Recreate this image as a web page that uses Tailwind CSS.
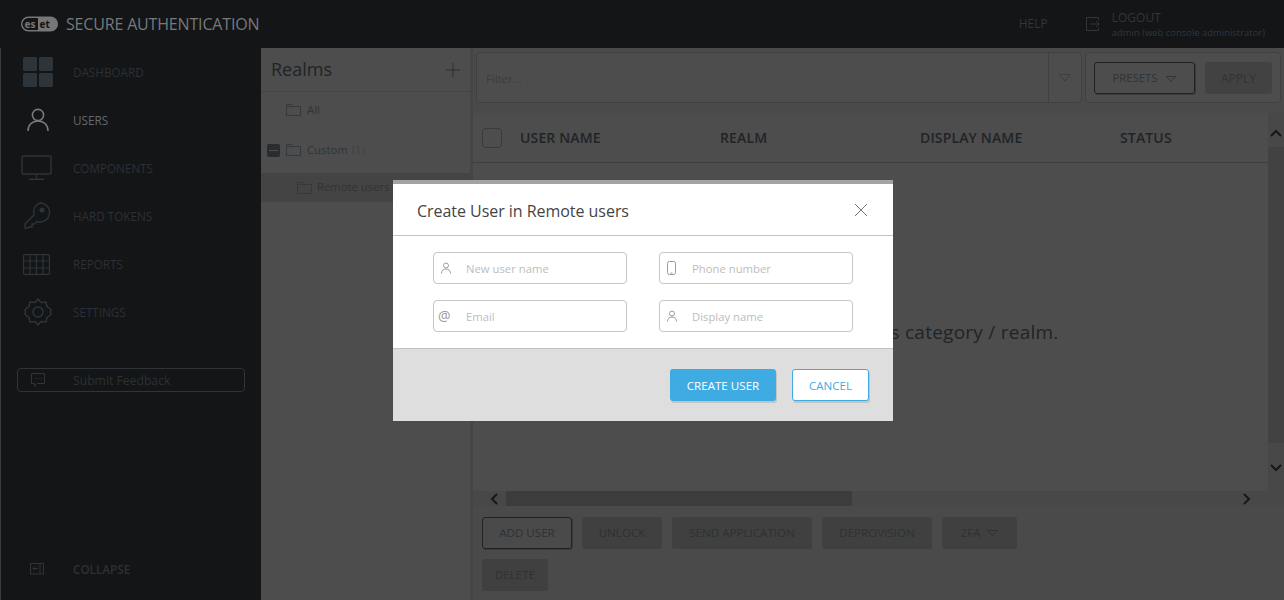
<!doctype html>
<html>
<head>
<meta charset="utf-8">
<script src="https://cdn.jsdelivr.net/npm/@tailwindcss/browser@4"></script>
</head>
<body class="bg-[#4d4d4d] font-['Open_Sans','Noto_Sans',sans-serif]">
<div class="relative w-[1284px] h-[600px] overflow-hidden">
  <header class="h-12 bg-[#131517] flex items-center pl-[21px]">
    <svg width="37" height="16" viewBox="0 0 37 16"><path d="M17 1.300h13a6.700 6.700 0 0 1 0 13.400H17z" fill="#777"/><rect x="0.700" y="1.300" width="35.600" height="13.400" rx="6.700" fill="none" stroke="#777" stroke-width="1.400"/><text x="3.500" y="11.500" font-size="10" font-weight="700" fill="#777" font-family="Open Sans">es</text><text x="18.500" y="11.500" font-size="10" font-weight="700" fill="#131517" font-family="Open Sans">et</text></svg>
    <span class="ml-[8px] text-[16px] tracking-[-0.17px] text-[#77797b]">SECURE AUTHENTICATION</span>
    <span class="ml-auto text-[12px] text-[#2f373c]">HELP</span>
    <svg class="ml-[38px]" width="14" height="14" viewBox="0 0 14 14" fill="none" stroke="#2f373c"><path d="M12.500 3.500V.5H.5v13h12v-3M4.500 7H13M10 4l3 3-3 3"/></svg>
    <div class="ml-[12px] mr-[19px] flex flex-col mt-[1px]">
      <span class="text-[12px] leading-[15px] text-[#2f373c]">LOGOUT</span>
      <span class="text-[9.450px] leading-[15px] text-[#2f373c]">admin (web console administrator)</span>
    </div>
  </header>
  <div class="flex h-[552px]">
    <aside class="w-[261px] bg-[#131517] flex flex-col text-[11.700px] text-[#2b3136] border-l border-[#3a3d3f]">
      <nav class="flex flex-col">
        <a class="h-12 flex items-center">
          <span class="w-[72px] pl-[22px] flex"><svg width="30" height="30" viewBox="0 0 30 30" fill="#2d343a"><rect width="14" height="14" rx="1.500"/><rect x="16" width="14" height="14" rx="1.500"/><rect y="16" width="14" height="14" rx="1.500"/><rect x="16" y="16" width="14" height="14" rx="1.500"/></svg></span><span class="pt-[2px]">DASHBOARD</span></a>
        <a class="h-12 flex items-center text-[#666a6d]">
          <span class="w-[72px] pl-[26px] flex"><svg width="22" height="24" viewBox="0 0 22 24" fill="none" stroke="#767a7c" stroke-width="1.600"><circle cx="11" cy="7" r="5.600"/><path d="M1 23c0-6 4-10 10-10s10 4 10 10"/></svg></span><span class="pt-[2px]">USERS</span></a>
        <a class="h-12 flex items-center">
          <span class="w-[72px] pl-[20px] flex"><svg width="32" height="26" viewBox="0 0 32 26" fill="none" stroke="#2d353a" stroke-width="1.400"><rect x="1" y="1" width="29" height="18" rx="1"/><path d="M15.500 19v4M8 24.300h15"/></svg></span><span class="pt-[2px]">COMPONENTS</span></a>
        <a class="h-12 flex items-center">
          <span class="w-[72px] pl-[23px] flex"><svg width="28" height="28" viewBox="0 0 28 28" fill="none" stroke="#2d353a" stroke-width="1.400"><path d="M16 1a9.500 9.500 0 1 1-3 18.500l-2.500 2.500H8v3H5l-1 1H1v-4l9-9A9.500 9.500 0 0 1 16 1z"/><circle cx="18" cy="8" r="1.800" fill="#2d353a"/></svg></span><span class="pt-[2px]">HARD TOKENS</span></a>
        <a class="h-12 flex items-center">
          <span class="w-[72px] pl-[22px] flex"><svg width="27" height="21" viewBox="0 0 27 21" fill="none" stroke="#2d353a" stroke-width="1.200"><rect x=".6" y=".6" width="25.800" height="19.800" rx="1"/><path d="M7 .6v19.800M13.500 .6v19.800M20 .6v19.800M.6 7h25.800M.6 14h25.800"/></svg></span><span class="pt-[2px]">REPORTS</span></a>
        <a class="h-12 flex items-center">
          <span class="w-[72px] pl-[23px] flex"><svg width="28" height="28" viewBox="0 0 28 28" fill="none" stroke="#2d353a" stroke-width="1.500"><path d="M14 1l3 3.500 5-.5 1 4.500 4 3-.5 2.500.5 2.500-4 3-1 4.500-5-.5-3 3.500-3-3.500-5 .5-1-4.500-4-3 .5-2.500L1 11.500l4-3L6 4l5 .5z"/><circle cx="14" cy="14" r="5"/></svg></span><span class="pt-[2px]">SETTINGS</span></a>
      </nav>
      <a class="mt-[32px] ml-[16px] w-[228px] h-6 border border-[#2d353a] rounded-[4px] flex items-center text-[12.200px]">
        <span class="w-[55px] pl-[13px] flex"><svg width="14" height="14" viewBox="0 0 14 14" fill="none" stroke="#2d353a"><path d="M.5 .5h13v10H6l-2.500 3v-3h-3z"/><path d="M4 5.500h1M7 5.500h1M10 5.500h1"/></svg></span><span class="pt-[2px]">Submit Feedback</span></a>
      <a class="mt-auto mb-[7px] h-[48px] flex items-center font-semibold">
        <span class="w-[72px] pl-[29px] flex"><svg width="15" height="12" viewBox="0 0 15 12" fill="none" stroke="#2d353a"><rect x=".5" y=".5" width="13" height="10.500"/><path d="M10 .5v10.500M8 5.500H3M5 3.500l-2 2 2 2"/></svg></span><span class="pt-[2px]">COLLAPSE</span></a>
    </aside>

    <section class="w-[209px] bg-[#4d4d4d] text-[#2e3438] border-r-[3px] border-[#454545] box-content text-[11.300px]">
      <div class="h-[44px] flex items-center justify-between pl-[10px] pr-[10px] border-b border-dotted border-[#3e3e3e]">
        <span class="text-[18px] text-[#202427]">Realms</span>
        <svg width="14" height="14" viewBox="0 0 14 14" stroke="#2a2f33"><path d="M7 0v14M0 7h14"/></svg>
      </div>
      <div class="h-[36px] flex items-center pl-[25px] gap-[6px]">
        <svg width="15" height="12" viewBox="0 0 15 12" fill="none" stroke="#33393d"><path d="M.5 11.500V.5h5l1 2h8v9z"/><path d="M.5 2.500h6"/></svg>All</div>
      <div class="h-[44px] flex items-center pl-[6px]">
        <span class="w-[13px] h-[13px] bg-[#2a2d2f] rounded-[2px] flex items-center justify-center"><span class="w-[9px] h-px bg-[#4d4d4d]"></span></span>
        <svg class="ml-[6px] mr-[6px]" width="15" height="12" viewBox="0 0 15 12" fill="none" stroke="#33393d"><path d="M.5 11.500V.5h5l1 2h8v9z"/><path d="M.5 2.500h6"/></svg>Custom<span class="ml-1 text-[#3e4245]">(1)</span></div>
      <div class="h-[29px] mt-[1px] flex items-center pl-[36px] gap-[5px] bg-[#444444]">
        <svg width="15" height="12" viewBox="0 0 15 12" fill="none" stroke="#33393d"><path d="M.5 11.500V.5h5l1 2h8v9z"/><path d="M.5 2.500h6"/></svg>Remote users</div>
    </section>

    <main class="flex-1 bg-[#4a4a4a] flex flex-col min-w-0">
      <div class="flex gap-[3px] pl-[3px] pr-[3px] pt-[4px] h-[65px] shrink-0">
        <div class="flex w-[606px] h-[51px] bg-[#4d4d4d] border border-[#404040] rounded-[4px]">
          <span class="flex-1 pl-[9px] leading-[51px] text-[11.300px] text-[#3c3c3c]">Filter...</span>
          <span class="w-[33px] border-l border-[#404040] flex items-center justify-center"><svg width="12" height="8" viewBox="0 0 12 8" fill="none" stroke="#3a3f43"><path d="M.5 .5h11L6 7z"/></svg></span>
        </div>
        <div class="flex-1 h-[51px] bg-[#4d4d4d] border border-[#404040] rounded-[4px] flex items-center pl-[8px] gap-[10px] text-[11.300px]">
          <span class="w-[101px] h-[32px] mt-[1px] pt-[1px] border border-[#1d2226] rounded-[3px] shadow-[1px_1px_0_#3a3a3a] flex items-center justify-center gap-[9px] text-[#2e3438]">PRESETS<svg width="10" height="6" viewBox="0 0 10 6" fill="none" stroke="#2e3438"><path d="M.5 .5h9L5 5.500z"/></svg></span>
          <span class="w-[67px] h-[32px] mt-[1px] pt-[1px] bg-[#424242] rounded-[3px] flex items-center justify-center text-[#2e3438] text-[12px]">APPLY</span>
        </div>
      </div>
      <div class="flex-1 min-h-0 flex">
        <div class="flex-1 bg-[#4d4d4d] flex flex-col">
          <div class="h-[50px] shrink-0 grid grid-cols-[47px_200px_200px_200px_1fr] items-center border-b border-[#3e3e3e] text-[14px] tracking-[0.15px] font-semibold text-[#202427]">
            <span class="ml-[9px] w-5 h-5 border border-[#3a3a3a] rounded-[4px]"></span>
            <span>USER NAME</span><span>REALM</span><span>DISPLAY NAME</span><span>STATUS</span>
          </div>
          <div class="flex-1 flex items-center justify-center text-[19px] tracking-[0.25px] text-[#202427] pt-[10px] pr-[14px]">There are no users in this category / realm.</div>
        </div>
        <div class="w-[16px] bg-[#484848] flex flex-col items-center">
          <div class="h-[34px] shrink-0 flex items-center justify-center pt-[6px]"><svg width="12" height="8" viewBox="0 0 12 8" fill="none" stroke="#14181b" stroke-width="2"><path d="M1 7l5-5 5 5"/></svg></div>
          <div class="w-full flex-1 bg-[#424242]"></div>
          <div class="h-[48px] shrink-0 flex items-center justify-center pt-[2px]"><svg width="12" height="8" viewBox="0 0 12 8" fill="none" stroke="#14181b" stroke-width="2"><path d="M1 1l5 5 5-5"/></svg></div>
        </div>
      </div>
      <div class="h-[15px] shrink-0 flex items-center pl-[17px] bg-[#484848]">
        <svg width="8" height="12" viewBox="0 0 8 12" fill="none" stroke="#14181b" stroke-width="2"><path d="M7 1L2 6l5 5"/></svg>
        <span class="ml-[8px] w-[346px] h-[15px] bg-[#3c3c3c]"></span>
        <svg class="ml-auto mr-[33px]" width="8" height="12" viewBox="0 0 8 12" fill="none" stroke="#14181b" stroke-width="2"><path d="M1 1l5 5-5 5"/></svg>
      </div>
      <div class="shrink-0 w-[560px] flex flex-wrap gap-[10px] pl-[9px] pt-[11px] pb-[9px] text-[11.600px] text-[#2c3236]">
        <span class="w-[90px] h-[32px] border border-[#1d2226] rounded-[3px] shadow-[1px_1px_0_#3a3a3a] flex items-center justify-center">ADD USER</span>
        <span class="w-[80px] h-[32px] bg-[#404040] rounded-[3px] flex items-center justify-center">UNLOCK</span>
        <span class="w-[140px] h-[32px] bg-[#404040] rounded-[3px] flex items-center justify-center">SEND APPLICATION</span>
        <span class="w-[110px] h-[32px] bg-[#404040] rounded-[3px] flex items-center justify-center">DEPROVISION</span>
        <span class="w-[75px] h-[32px] bg-[#404040] rounded-[3px] flex items-center justify-center gap-[7px]">2FA<svg width="11" height="6" viewBox="0 0 11 6" fill="none" stroke="#2c3236"><path d="M.5 .5h10L5.500 5.500z"/></svg></span>
        <span class="w-[66px] h-[32px] bg-[#404040] rounded-[3px] flex items-center justify-center">DELETE</span>
      </div>
    </main>
  </div>

  <div class="absolute left-[393px] top-[180px] w-[500px] h-[241px] bg-white border-t-4 border-[#a3a3a3] flex flex-col">
    <div class="h-[52px] shrink-0 flex items-center justify-between pl-[24px] pr-[25px] border-b border-[#c4c4c4]">
      <span class="text-[16px] pt-[2px] tracking-[-0.04px] text-[#444444]">Create User in Remote users</span>
      <svg width="14" height="14" viewBox="0 0 14 14" stroke="#777777" stroke-width="1"><path d="M1 1l12 12M13 1L1 13"/></svg>
    </div>
    <div class="h-[113px] shrink-0 border-b border-[#c4c4c4] grid grid-cols-[194px_194px] gap-x-[32px] gap-y-[16px] pl-[40px] pt-[16px] content-start text-[11.300px] text-[#bdbdbd]">
      <div class="h-[32px] border border-[#c6c6c6] rounded-[4px] flex items-center">
        <span class="w-[32px] pl-[6px] flex"><svg width="12" height="12" viewBox="0 0 12 12" fill="none" stroke="#9a9a9a"><circle cx="6" cy="3.500" r="2.500"/><path d="M1.500 11.500c0-3 2-4.500 4.500-4.500s4.500 1.500 4.500 4.500"/></svg></span><span class="pt-[2px]">New user name</span></div>
      <div class="h-[32px] border border-[#c6c6c6] rounded-[4px] flex items-center">
        <span class="w-[32px] pl-[7px] flex"><svg width="9" height="14" viewBox="0 0 9 14" fill="none" stroke="#9a9a9a"><rect x=".5" y=".5" width="8" height="13" rx="2"/><path d="M3.500 12h2"/></svg></span><span class="pt-[2px]">Phone number</span></div>
      <div class="h-[32px] border border-[#c6c6c6] rounded-[4px] flex items-center">
        <span class="w-[32px] pl-[4px] flex text-[14px] leading-[14px] text-[#9a9a9a]">@</span><span class="pt-[2px]">Email</span></div>
      <div class="h-[32px] border border-[#c6c6c6] rounded-[4px] flex items-center">
        <span class="w-[32px] pl-[6px] flex"><svg width="12" height="12" viewBox="0 0 12 12" fill="none" stroke="#9a9a9a"><circle cx="6" cy="3.500" r="2.500"/><path d="M1.500 11.500c0-3 2-4.500 4.500-4.500s4.500 1.500 4.500 4.500"/></svg></span><span class="pt-[2px]">Display name</span></div>
    </div>
    <div class="flex-1 bg-[#dedede] flex items-start justify-end gap-[16px] pt-[20px] pr-[24px] text-[11.600px]">
      <span class="w-[106px] h-[32px] pt-[2px] bg-[#3fabe3] rounded-[3px] shadow-[1px_2px_0_#c4c4c4] flex items-center justify-center text-white">CREATE USER</span>
      <span class="w-[77px] h-[32px] pt-[2px] bg-white border border-[#3fabe3] rounded-[3px] shadow-[1px_2px_0_#c4c4c4] flex items-center justify-center text-[#3fabe3]">CANCEL</span>
    </div>
  </div>
</div>
</body>
</html>
